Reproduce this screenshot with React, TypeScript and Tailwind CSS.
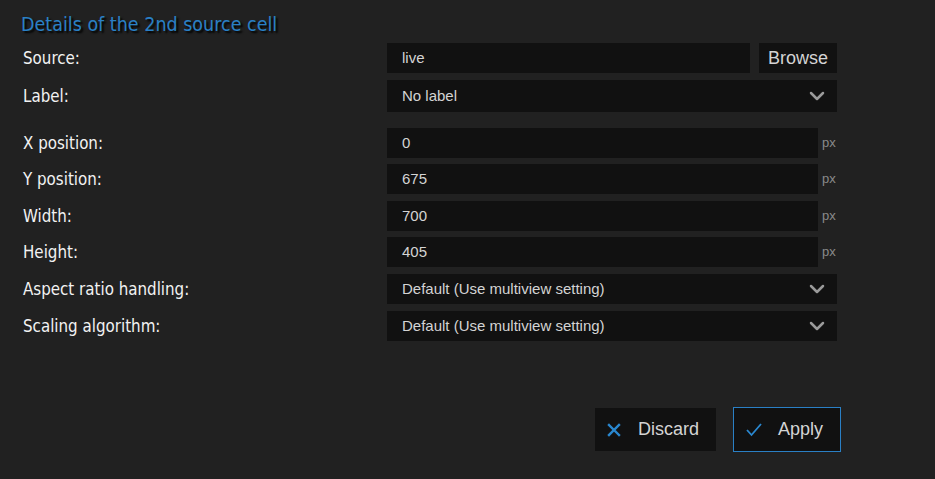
import { ChevronDown } from "lucide-react";

type Row = { label: string; value: string; kind: "input" | "px" | "select" };

const rows: { row: Row; top: string }[] = [
  { row: { label: "X position:", value: "0", kind: "px" }, top: "mt-[16px]" },
  { row: { label: "Y position:", value: "675", kind: "px" }, top: "mt-[6px]" },
  { row: { label: "Width:", value: "700", kind: "px" }, top: "mt-[7px]" },
  { row: { label: "Height:", value: "405", kind: "px" }, top: "mt-[6px]" },
  { row: { label: "Aspect ratio handling:", value: "Default (Use multiview setting)", kind: "select" }, top: "mt-[7px]" },
  { row: { label: "Scaling algorithm:", value: "Default (Use multiview setting)", kind: "select" }, top: "mt-[7px]" },
];

const labelCls =
  "w-[366px] shrink-0 pl-[2px] pt-[2px] text-[16.8px] text-[#f2f2f2] font-['DejaVu_Sans_Condensed','DejaVu_Sans',sans-serif]";
const fieldText = "text-[15px] text-[#d4d4d4] font-['Liberation_Sans',Arial,sans-serif]";

function Chevron() {
  return <ChevronDown className="h-[24px] w-[24px] text-[#9a9a9a]" strokeWidth={2.5} />;
}

function FieldRow({ row, top }: { row: Row; top: string }) {
  return (
    <div className={`flex items-center ${top}`}>
      <div className={labelCls}>{row.label}</div>
      {row.kind === "px" && (
        <div className="flex items-center">
          <div className={`flex h-[30px] w-[431px] items-center bg-[#111111] pl-[15px] ${fieldText}`}>{row.value}</div>
          <span className="ml-[4px] text-[13px] text-[#8a8a8a] font-['Liberation_Sans',Arial,sans-serif]">px</span>
        </div>
      )}
      {row.kind === "select" && (
        <div className={`flex h-[30px] w-[450px] items-center justify-between bg-[#111111] pl-[15px] pr-[8px] ${fieldText}`}>
          <span>{row.value}</span>
          <Chevron />
        </div>
      )}
    </div>
  );
}

export default function App() {
  return (
    <div className="h-[479px] w-[935px] bg-[#212121] pl-[21px]">
      <h2 className="pt-[12px] text-[19.5px] leading-[26px] text-[#2a80c5] font-['DejaVu_Sans_Condensed','DejaVu_Sans',sans-serif] [text-shadow:2px_2px_2px_#000]">
        Details of the 2nd source cell
      </h2>

      <div className="mt-[5px]">
        <div className="flex items-center">
          <div className={labelCls}>Source:</div>
          <div className={`flex h-[30px] w-[363px] items-center bg-[#111111] pl-[15px] ${fieldText}`}>live</div>
          <button className="ml-[9px] flex h-[30px] w-[78px] items-center justify-center bg-[#111111] text-[18px] text-[#d4d4d4] font-['Liberation_Sans',Arial,sans-serif]">
            Browse
          </button>
        </div>
        <div className="mt-[7px] flex items-center">
          <div className={labelCls}>Label:</div>
          <div className={`flex h-[32px] w-[450px] items-center justify-between bg-[#111111] pl-[15px] pr-[8px] ${fieldText}`}>
            <span>No label</span>
            <Chevron />
          </div>
        </div>
        {rows.map((r) => (
          <FieldRow key={r.row.label} row={r.row} top={r.top} />
        ))}
      </div>

      <div className="mt-[66px] flex justify-end gap-[17px] pr-[94px] font-['Liberation_Sans',Arial,sans-serif]">
        <button className="mt-[1px] flex h-[43px] w-[121px] items-center bg-[#111111] pl-[12px] text-[18px] text-[#d4d4d4]">
          <svg width="14" height="14" viewBox="0 0 14 14" className="mr-[17px]">
            <path d="M2 2 L12 12 M12 2 L2 12" stroke="#2a88d0" strokeWidth="2.4" strokeLinecap="square" />
          </svg>
          Discard
        </button>
        <button className="flex h-[45px] w-[108px] items-center border border-[#2a80c5] bg-[#111111] pl-[12px] text-[18px] text-[#d4d4d4]">
          <svg width="16" height="14" viewBox="0 0 16 14" className="mr-[16px]">
            <path d="M1 7 L5.5 12 L15 1" stroke="#2a88d0" strokeWidth="1.8" fill="none" />
          </svg>
          Apply
        </button>
      </div>
    </div>
  );
}
